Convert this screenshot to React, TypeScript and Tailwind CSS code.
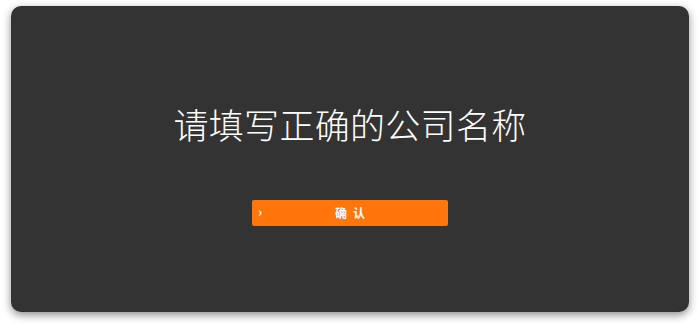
export default function App() {
  return (
    <div className="flex h-[328px] w-[700px] bg-white pl-[11px] pr-[11px] pt-[6px] pb-[16px]">
      <div
        className="flex flex-1 flex-col items-center rounded-[10px] bg-[#333333] shadow-[0_3px_8px_rgba(0,0,0,0.45)]"
        style={{ fontFamily: '"Noto Sans CJK SC", "Noto Sans", sans-serif' }}
      >
        <h1 className="mt-[96px] text-[35px] font-light leading-[44px] tracking-[0.3px] text-white">
          请填写正确的公司名称
        </h1>
        <button
          type="button"
          className="relative mt-[54px] flex h-[26px] w-[196px] items-center justify-center rounded-[2px] bg-[#ff760d] text-[12px] font-bold text-white"
        >
          <span className="absolute left-[6px] top-[4px] text-[13px] font-bold leading-[16px] text-[#fff1e6]">
            ›
          </span>
          <span className="tracking-[6px] pl-[6px]">确认</span>
        </button>
      </div>
    </div>
  );
}
